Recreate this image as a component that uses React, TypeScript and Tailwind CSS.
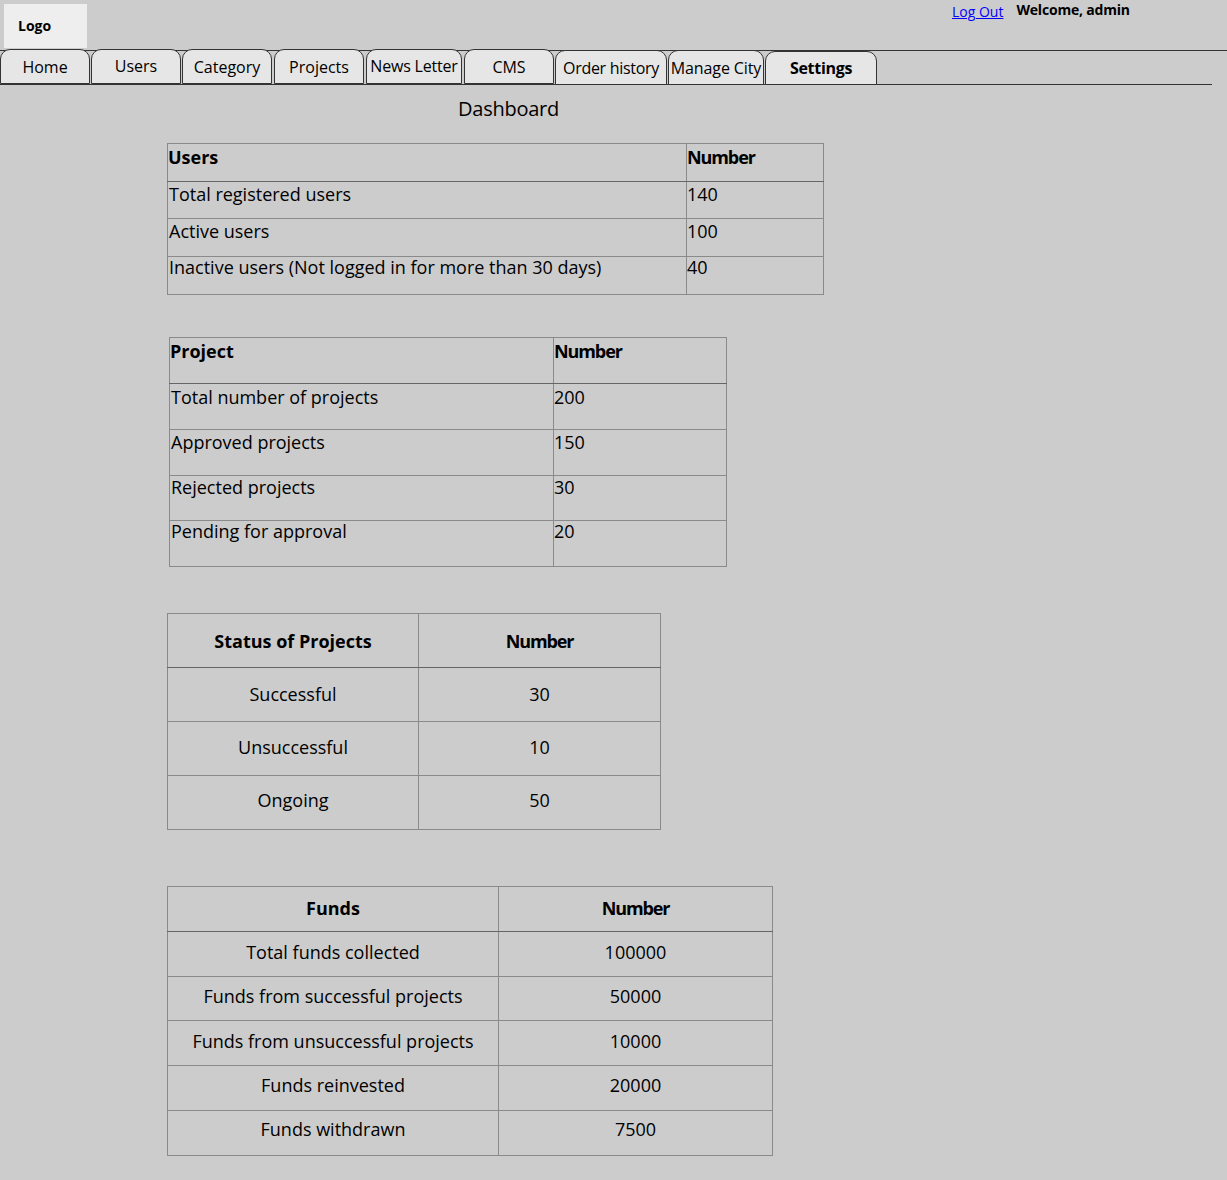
const tabs = [
  { label: 'Home', className: 'w-[90px] -mt-[2px] h-[35px]' },
  { label: 'Users', className: 'w-[90px] ml-px -mt-[2px] h-[35px] pb-[2px]' },
  { label: 'Category', className: 'w-[90px] ml-px -mt-[2px] h-[35px]' },
  { label: 'Projects', className: 'w-[90px] ml-[2px] -mt-[2px] h-[35px]' },
  { label: 'News Letter', className: 'w-[96px] ml-[2px] -mt-[2px] h-[35px] pb-[2px] tracking-[-0.2px]' },
  { label: 'CMS', className: 'w-[90px] ml-[2px] -mt-[2px] h-[35px]' },
  { label: 'Order history', className: 'w-[112px] ml-px -mt-px h-[35px] pt-px tracking-[-0.3px]' },
  { label: 'Manage City', className: 'w-[96px] ml-px -mt-px h-[35px] pt-px tracking-[-0.1px]' },
  { label: 'Settings', className: 'w-[112px] ml-px mt-0 h-[34px] font-bold tracking-[-0.3px]' },
];

type DataTableProps = {
  className: string;
  firstCol: string;
  rowHeights: string[];
  // nudges the text of each row, the cells in the mockup are not quite even
  rowText: string[];
  centered?: boolean;
  rows: string[][];
};

function DataTable({ className, firstCol, rowHeights, rowText, centered, rows }: DataTableProps) {
  return (
    <table className={`table-fixed border-collapse ${className}`}>
      <tbody>
        {rows.map((row, i) => (
          <tr key={row[0]} className={rowHeights[i]}>
            {row.map((cell, j) => (
              <td
                key={j}
                className={`border border-[#8a8a8a] p-0 text-[18px] text-black ${rowText[i]} ${
                  i === 0 ? 'font-bold border-b-[#666666]' : ''
                } ${i === 0 && j === 1 ? 'tracking-[-1.1px]' : ''} ${j === 0 ? firstCol : ''} ${
                  centered ? 'text-center align-middle' : 'align-top'
                } ${!centered && j === 0 && i > 0 ? 'pl-px' : ''}`}
              >
                {cell}
              </td>
            ))}
          </tr>
        ))}
      </tbody>
    </table>
  );
}

export default function App() {
  return (
    <div className="min-h-[1180px] w-[1227px] bg-[#cccccc] font-['Open_Sans',sans-serif] overflow-hidden">
      {/* Header */}
      <div className="flex h-[50px] items-start">
        <div className="ml-[4px] mt-[4px] flex h-[44px] w-[83px] items-center bg-[#eeeeee] pb-[2px] pl-[14px] text-[14px] font-bold text-black">
          Logo
        </div>
        <a href="#" className="ml-[865px] mt-[2px] text-[14px] leading-[20px] text-[#0000ff] underline">
          Log Out
        </a>
        <span className="ml-[13px] text-[14px] leading-[20px] font-bold tracking-[-0.2px] text-black">
          Welcome, admin
        </span>
      </div>

      {/* Nav */}
      <div className="border-t border-[#333333]">
        <div className="flex h-[34px] w-[1212px] items-start border-b border-[#333333]">
          {tabs.map(tab => (
            <div
              key={tab.label}
              className={`flex shrink-0 items-center justify-center rounded-t-[10px] border border-[#333333] bg-[#e6e6e6] text-[16px] whitespace-nowrap text-black ${tab.className}`}
            >
              {tab.label}
            </div>
          ))}
        </div>
      </div>

      {/* Content */}
      <h1 className="ml-[458px] mt-[10px] text-[20px] leading-[28px] tracking-[-0.25px] text-black">Dashboard</h1>

      <DataTable
        className="ml-[167px] mt-[20px] w-[657px]"
        firstCol="w-[519px]"
        rowHeights={['h-[38px]', 'h-[37px]', 'h-[38px]', 'h-[38px]']}
        rowText={['leading-[26px]', 'leading-[24px]', 'leading-[24px]', 'leading-[21px]']}
        rows={[
          ['Users', 'Number'],
          ['Total registered users', '140'],
          ['Active users', '100'],
          ['Inactive users (Not logged in for more than 30 days)', '40'],
        ]}
      />

      <DataTable
        className="ml-[169px] mt-[42px] w-[558px]"
        firstCol="w-[384px]"
        rowHeights={['h-[46px]', 'h-[46px]', 'h-[46px]', 'h-[45px]', 'h-[46px]']}
        rowText={['leading-[26px]', 'leading-[26px]', 'leading-[25px]', 'leading-[22px]', 'leading-[20px]']}
        rows={[
          ['Project', 'Number'],
          ['Total number of projects', '200'],
          ['Approved projects', '150'],
          ['Rejected projects', '30'],
          ['Pending for approval', '20'],
        ]}
      />

      <DataTable
        className="ml-[167px] mt-[46px] w-[494px]"
        firstCol="w-[251px]"
        centered
        rowHeights={['h-[54px]', 'h-[54px]', 'h-[54px]', 'h-[54px]']}
        rowText={['leading-[26px]', 'leading-[26px] pb-[2px]', 'leading-[26px] pb-[4px]', 'leading-[26px] pb-[6px]']}
        rows={[
          ['Status of Projects', 'Number'],
          ['Successful', '30'],
          ['Unsuccessful', '10'],
          ['Ongoing', '50'],
        ]}
      />

      <DataTable
        className="ml-[167px] mt-[56px] w-[606px]"
        firstCol="w-[331px]"
        centered
        rowHeights={['h-[45px]', 'h-[45px]', 'h-[44px]', 'h-[45px]', 'h-[45px]', 'h-[45px]']}
        rowText={[
          'leading-[26px] pb-[2px]',
          'leading-[26px] pb-[4px]',
          'leading-[26px] pb-[6px]',
          'leading-[26px] pb-[4px]',
          'leading-[26px] pb-[6px]',
          'leading-[26px] pb-[8px]',
        ]}
        rows={[
          ['Funds', 'Number'],
          ['Total funds collected', '100000'],
          ['Funds from successful projects', '50000'],
          ['Funds from unsuccessful projects', '10000'],
          ['Funds reinvested', '20000'],
          ['Funds withdrawn', '7500'],
        ]}
      />
    </div>
  );
}
